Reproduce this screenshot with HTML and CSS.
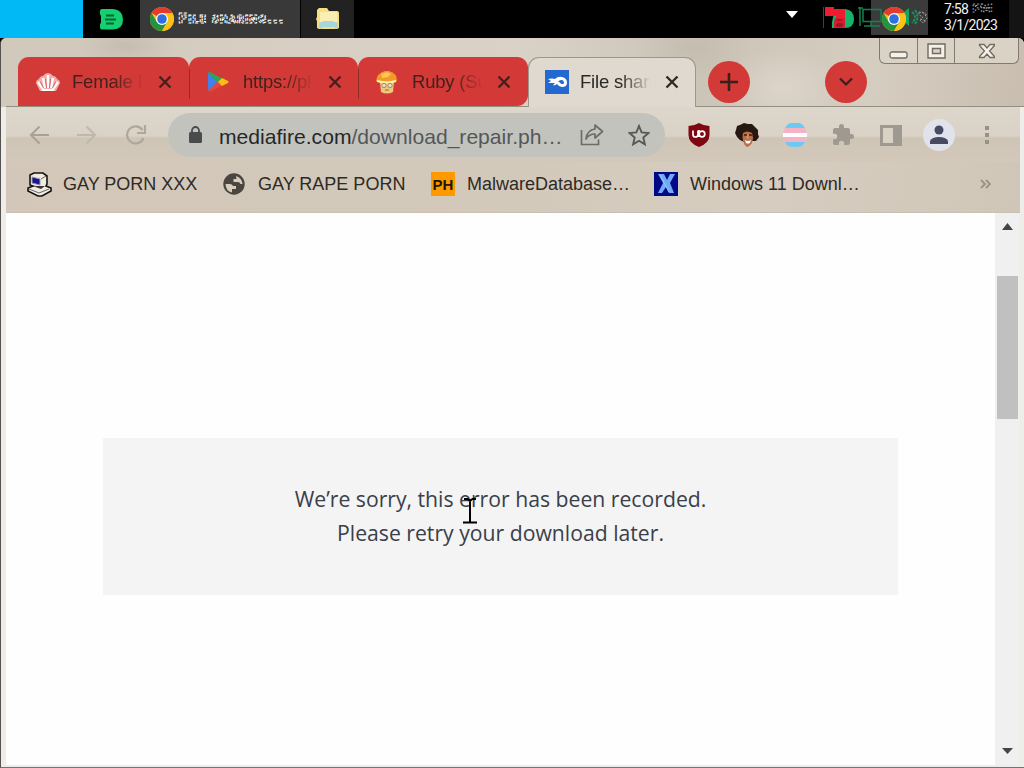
FILE: index.html
```html
<!DOCTYPE html>
<html lang="en">
<head>
    <meta charset="UTF-8">
    <title>File sharing</title>
    <link rel="stylesheet" href="styles.css">
</head>
<body>
    <svg width="0" height="0" class="defs">
        <symbol id="chrome" viewBox="0 0 24 24">
            <circle cx="12" cy="12" r="12" fill="#fbc116"/>
            <path d="M12 12 1.6 6A12 12 0 0 1 22.4 6z" fill="#e33b2e"/>
            <path d="M12 6h10.4L12 12z" fill="#e33b2e"/>
            <path d="M1.6 6A12 12 0 0 0 12 24l5.2-9L12 12 6.8 15z" fill="#229342"/>
            <path d="M22.4 6H12v6l5.2 3L12 24A12 12 0 0 0 22.4 6z" fill="#fbc116"/>
            <circle cx="12" cy="12" r="6" fill="#fff"/>
            <circle cx="12" cy="12" r="4.8" fill="#2f6fe0"/>
        </symbol>
        <symbol id="close" viewBox="0 0 14 14">
            <path d="M1.5 1.5l11 11M12.5 1.5l-11 11" fill="none" stroke="currentColor" stroke-width="2.3"/>
        </symbol>
    </svg>

    <div class="taskbar">
        <div class="start"></div>
        <div class="task pinned">
            <svg width="23" height="21" viewBox="0 0 23 21">
                <path d="M2 0h11q10 1 10 10.500T13 20.500H2q-2 0-2-2v-3l1-2V7L0 5V2q0-2 2-2z" fill="#13cf70"/>
                <path d="M6 6.500h8M5 10.500h11M6 14.500h8" stroke="#063" stroke-width="1.800"/>
            </svg>
        </div>
        <div class="task active">
            <svg width="24" height="24"><use href="#chrome"/></svg>
            <svg class="task-title" width="118" height="24">
                <text x="1" y="16">File sharing...</text>
            </svg>
        </div>
        <div class="task folder">
            <svg width="24" height="22" viewBox="0 0 24 22">
                <path d="M3 0h8l2 3h8q2 0 2 2v15l-2 1H3l-2-1V13l-1-2 1-2V2z" fill="#f5df85"/>
                <path d="M4 4h17v10H4z" fill="#fbeeb0"/>
                <path d="M3 15l5-2h8l6 2v5l-3 1v-2H6v2l-3-1z" fill="#a5d8dc"/>
            </svg>
        </div>
        <div class="tray">
            <svg class="tray-arrow" width="12" height="7"><path d="M0 0h12L6 7z" fill="#fff"/></svg>
            <svg class="tray-icons" width="108" height="38" viewBox="0 0 108 38">
                <path d="M50 0h57v35H50z" fill="#3b3b3b"/>
                <path d="M14 9h10q9 1 9 10t-9 9H11v-6z" fill="#14b568"/>
                <path d="M2.500 7v21" stroke="#a3122a"/>
                <path d="M4 7h9v2h11v9h-9v-2H4z" fill="#ee1c2e"/>
                <path d="M14 18h10v10H13v-5z" fill="#d81b2d"/>
                <path d="M16 20h5M16 24h5v2h-5z" stroke="#6d1824" fill="none"/>
                <path d="M39 7v19M42 9.500h18v12H42zM50 22v4M43 26h16M37 8h5" stroke="#14804f" stroke-width="1.500" fill="none"/>
                <path d="M82 13l6-5v18l-6-5z" fill="#13a862"/>
                <svg x="61" y="7" width="24" height="24"><use href="#chrome"/></svg>
                <path d="M91 12q6 5 0 11M94 10q5 7 0 14" stroke="#14945a" stroke-width="2" stroke-dasharray="3 1" fill="none"/>
                <path d="M98 12l5 1 3 5-3 5-4-2 3-4-4-2zM101 12l5 3M99 19l6 2" stroke="#9b9b9b" fill="none" stroke-dasharray="2 1.500"/>
            </svg>
            <div class="clock">
                <div class="clock-time">7:58
                    <svg width="22" height="14"><text x="0" y="11" textLength="20" lengthAdjust="spacingAndGlyphs">PM</text></svg>
                </div>
                <div>3/1/2023</div>
            </div>
            <div class="peek"></div>
        </div>
    </div>

    <div class="window">
        <div class="tabstrip">
            <div class="tab">
                <svg class="favicon" width="26" height="20" viewBox="0 0 26 20">
                    <path d="M5 19L1 11q0-3 3-4 1-3 4-3 2-3 5-3t5 3q3 0 4 3 3 1 3 4l-4 8z" fill="#f0aeaa"/>
                    <path d="M8 17L3 10M10 16L8 6M13 16V3M16 16l2-10M18 17l5-7" stroke="#fff" stroke-width="2.400"/>
                    <path d="M5.500 10l3 6M10.500 7l1 9M15.500 7l-1 9M20.500 10l-3 6" stroke="#d0645f"/>
                    <path d="M7 17h12v2H7z" fill="#fff"/>
                </svg>
                <span class="tab-title">Female P</span>
                <svg class="tab-close" width="14" height="14"><use href="#close"/></svg>
            </div>
            <div class="tab">
                <svg class="favicon" width="26" height="22" viewBox="0 0 26 22">
                    <path d="M2 2v18l10-9z" fill="#3f82ee"/>
                    <path d="M2 2q1-2 4 0l11 6-5 4z" fill="#2fa456"/>
                    <path d="M2 20q1 1 4 0l11-6-5-4z" fill="#e6473c"/>
                    <path d="M16 7l6 3q1.500 1 0 2l-6 3-4-4z" fill="#fbbc15"/>
                </svg>
                <span class="tab-title">https://pl</span>
                <svg class="tab-close" width="14" height="14"><use href="#close"/></svg>
            </div>
            <div class="tab">
                <svg class="favicon" width="26" height="24" viewBox="0 0 26 24">
                    <path d="M5 12h14l-1 10q-6 3-12 0z" fill="#efc978"/>
                    <path d="M1 11Q2 3 10 1h4q8 2 8 10-10 4-21 0z" fill="#f39a25"/>
                    <path d="M6 4l6-2 4 2-3 3-6 1z" fill="#ffc558"/>
                    <path d="M2 11q10 3 19 0" stroke="#fff0b0" stroke-width="2" fill="none"/>
                    <circle cx="9" cy="15.500" r="2.200" fill="#e5dcc5" stroke="#a58b65"/>
                    <circle cx="15" cy="15.500" r="2.200" fill="#e5dcc5" stroke="#a58b65"/>
                    <path d="M10 20h4" stroke="#a06a3a"/>
                </svg>
                <span class="tab-title">Ruby (Su</span>
                <svg class="tab-close" width="14" height="14"><use href="#close"/></svg>
            </div>
            <div class="tab current">
                <svg class="favicon" width="24" height="24" viewBox="0 0 24 24">
                    <path d="M0 0h24v24H0z" fill="#2369cf"/>
                    <path d="M3 9q4-1 7 0 3-3 7-2 5 1 5 5.500T17 17q-3 0-5-3-2 2-4 1l2-2q-4 0-7 0l3-2z" fill="#fff"/>
                    <path d="M13 11.500q2-2 4-1.500 2 .5 2 2.500T17 14t-2-1.500z" fill="#2369cf"/>
                </svg>
                <span class="tab-title">File shari</span>
                <svg class="tab-close" width="14" height="14"><use href="#close"/></svg>
            </div>
            <div class="round new-tab">
                <svg width="18" height="18"><path d="M9 0v18M0 9h18" stroke="#3a1f1a" stroke-width="2.600"/></svg>
            </div>
            <div class="round search-tabs">
                <svg width="14" height="10"><path d="M1 1.500l6 6 6-6" fill="none" stroke="#3a1f1a" stroke-width="2.200"/></svg>
            </div>
            <div class="controls">
                <div class="control minimize">
                    <svg width="19" height="8"><rect x="1" y="1" width="17" height="6" rx="2" fill="#f6f1e8" stroke="#6f6b62" stroke-width="1.300"/></svg>
                </div>
                <div class="control maximize">
                    <svg width="19" height="17"><path d="M1 1h17v14H1zM5.500 5.500h8v5h-8z" fill="#f6f1e8" fill-rule="evenodd" stroke="#6f6b62" stroke-width="1.400"/></svg>
                </div>
                <div class="control close">
                    <svg width="17" height="17"><path d="M1.500 1.500H6L9 5l3-3.500h4.500v1l-5 5.500 5 5.500v1H12L9 11l-3 3.500H1.500v-1l5-5.500-5-5.500z" fill="#f6f1e8" stroke="#6f6b62" stroke-width="1.300"/></svg>
                </div>
            </div>
        </div>

        <div class="toolbar">
            <svg class="nav" width="20" height="20" viewBox="0 0 20 20"><path d="M20 10H2M10.500 1.500L2 10l8.500 8.500" fill="none" stroke="#a8a197" stroke-width="2"/></svg>
            <svg class="nav" width="20" height="20" viewBox="0 0 20 20"><path d="M0 10h18M9.500 1.500L18 10l-8.500 8.500" fill="none" stroke="#c0b8ac" stroke-width="2"/></svg>
            <svg class="nav" width="22" height="20" viewBox="0 0 22 20"><path d="M17.500 5A8.500 8.500 0 1 0 18.500 13M20 0v8h-8" fill="none" stroke="#aea79c" stroke-width="2.200"/></svg>
            <div class="omnibox">
                <svg class="lock" width="13" height="17" viewBox="0 0 13 17">
                    <path d="M3 7V4.500a3.500 3.500 0 0 1 7 0V7" fill="none" stroke="#4a4b4c" stroke-width="1.800"/>
                    <rect y="6" width="13" height="11" rx="1.500" fill="#4a4b4c"/>
                </svg>
                <span class="url"><b>mediafire.com</b>/download_repair.ph…</span>
                <svg class="share" width="24" height="24" viewBox="0 0 24 24" fill="none" stroke="#6b6d68" stroke-width="1.700">
                    <path d="M1.500 7v14.500h17v-5"/>
                    <path d="M15 2l7.500 6.500L15 15v-4q-6 0-9 5 1-9 9-10z" stroke-linejoin="round"/>
                </svg>
                <svg class="star" width="22" height="22" viewBox="0 0 22 22"><path d="M11 2l2.600 6.400 6.900.6-5.200 4.600 1.600 6.800-5.900-3.600-5.900 3.600 1.600-6.800L1.500 9l6.900-.6z" fill="none" stroke="#575954" stroke-width="1.900"/></svg>
            </div>
            <div class="extensions">
                <svg width="24" height="24" viewBox="0 0 24 24">
                    <path d="M12 0q5 3 10.500 3v9q0 8-10.500 12Q1.500 20 1.500 12V3Q7 3 12 0z" fill="#7e0712"/>
                    <path d="M6 7.500v4q0 2.500 2.500 2.500t2.500-2.500v-4M12 7v7" fill="none" stroke="#fff" stroke-width="1.700"/>
                    <circle cx="15" cy="11" r="2.800" fill="none" stroke="#fff" stroke-width="1.700"/>
                </svg>
                <svg width="24" height="24" viewBox="0 0 24 24">
                    <path d="M5 2l4-2 4 1 4 0 3 3 3 3v4l1 3-3 4-4 0-3 1H9l-4-2-3-3-2-4 1-3 1-4z" fill="#271711"/>
                    <path d="M8 10q4-3 9 0l1 5-1 5q-3 4-5 4-3-2-4-6-1-4 0-8z" fill="#b96f4a"/>
                    <path d="M9 12h3M14 12h3" stroke="#3d1d12" stroke-width="1.500"/>
                    <path d="M10 17q3 2 6 0l-1 3q-3 1-4 0z" fill="#fff"/>
                    <path d="M13 11l-1 4h2" stroke="#e0a078" fill="none"/>
                </svg>
                <svg width="24" height="24" viewBox="0 0 24 24">
                    <path d="M5 1Q12-2 19 1l3 4H2z" fill="#6cc9f4"/>
                    <path d="M2 5h20l2 5H0z" fill="#f4b2c4"/>
                    <path d="M0 10h24v4H0z" fill="#fff"/>
                    <path d="M0 14h24l-2 5H2z" fill="#f4b2c4"/>
                    <path d="M2 19h20l-3 4q-7 2-14 0z" fill="#6cc9f4"/>
                </svg>
                <svg width="24" height="24" viewBox="0 0 24 24"><path d="M20.500 11H19V7a2 2 0 0 0-2-2h-4V3.500a2.500 2.500 0 0 0-5 0V5H4a2 2 0 0 0-2 2v3.800h1.500a2.700 2.700 0 0 1 0 5.400H2V20a2 2 0 0 0 2 2h3.800v-1.500a2.700 2.700 0 0 1 5.400 0V22H17a2 2 0 0 0 2-2v-4h1.500a2.500 2.500 0 0 0 0-5z" fill="#9f9990"/></svg>
                <svg width="24" height="24" viewBox="0 0 24 24"><path d="M1 2h22v21H1zM4 5v15h10V5z" fill="#9f9990" fill-rule="evenodd"/><path d="M4 5h10v15H4z" fill="#d9d1c4"/></svg>
            </div>
            <div class="profile">
                <svg width="20" height="20" viewBox="0 0 20 20"><circle cx="10" cy="5" r="4.500" fill="#474b61"/><path d="M1 19v-3q2-4 9-4t9 4v3z" fill="#474b61"/></svg>
            </div>
            <svg class="menu" width="6" height="20"><path d="M1 1h4v4H1zM1 8h4v4H1zM1 15h4v4H1z" fill="#989188"/></svg>
        </div>

        <div class="bookmarks">
            <div class="bookmark b1">
                <svg width="26" height="26" viewBox="0 0 26 26">
                    <path d="M4 4l4-2h9l4 3v8l-1 2 5 2v3l-9 5h-4L2 20v-3l5-2-3-1z" fill="#eeebe4" stroke="#16130f" stroke-width="1.600"/>
                    <path d="M6 6l8 2v6l-8-2z" fill="#17149a" stroke="#999"/>
                    <path d="M3 18l10 4 10-4M15 8l5-3" stroke="#6b665f" fill="none"/>
                    <path d="M7 15h12l-4 3z" fill="#3a362f"/>
                </svg>
                <span>GAY PORN XXX</span>
            </div>
            <div class="bookmark b2">
                <svg width="22" height="22" viewBox="0 0 22 22">
                    <circle cx="11" cy="11" r="10.700" fill="#4b463f"/>
                    <path d="M2.500 11h4q3 0 3.500 2h3v3H9v3.500q-6-1-6.500-8.500zM13 3q6 2 6.500 8h-2q-.5-2-3-2h-4V6h3z" fill="#d8cdbd"/>
                </svg>
                <span>GAY RAPE PORN</span>
            </div>
            <div class="bookmark b3">
                <div class="ph">PH</div>
                <span>MalwareDatabase…</span>
            </div>
            <div class="bookmark b4">
                <svg width="24" height="24" viewBox="0 0 24 24">
                    <path d="M0 0h24v24H0z" fill="#000a88"/>
                    <path d="M4 2h6l3 6 3-6h5l-5 9 4 10h-5l-3-6-4 6H4l5-10z" fill="#72a9f7"/>
                    <path d="M6 3l9 17" stroke="#9cc6ff"/>
                </svg>
                <span>Windows 11 Downl…</span>
            </div>
            <svg class="more" width="11" height="10"><path d="M1 1l4 4-4 4M6 1l4 4-4 4" fill="none" stroke="#989188" stroke-width="1.800"/></svg>
        </div>

        <div class="content">
            <div class="page">
                <div class="error">
                    <p>We’re sorry, this error has been recorded.</p>
                    <p>Please retry your download later.</p>
                    <svg class="cursor" width="14" height="26"><path d="M1 1h4M9 1h4M5 1l2 2 2-2M7 2v22M0 24.500h14" fill="none" stroke="#000" stroke-width="2"/></svg>
                </div>
            </div>
            <div class="scrollbar">
                <svg width="11" height="7"><path d="M0 7h11L5.500 0z" fill="#454545"/></svg>
                <div class="thumb"></div>
                <svg class="down" width="11" height="7"><path d="M0 0h11L5.500 6z" fill="#454545"/></svg>
            </div>
        </div>
    </div>
</body>
</html>
```

FILE: styles.css
```css
* {
    margin: 0;
    padding: 0;
    box-sizing: border-box;
}

body {
    width: 1024px;
    height: 768px;
    overflow: hidden;
    background: #000;
    font-family: "Liberation Sans", Arial, sans-serif;
    display: flex;
    flex-direction: column;
}

svg {
    display: block;
    flex: none;
}

.defs {
    position: absolute;
}

/* taskbar */
.taskbar {
    height: 38px;
    flex: none;
    display: flex;
    background: #000;
}

.start {
    width: 83px;
    background: #00b9f5;
}

.task {
    display: flex;
    align-items: center;
}

.pinned {
    width: 57px;
    padding-left: 17px;
}

.active {
    width: 160px;
    padding-left: 10px;
    background: #393939;
}

.task-title {
    margin-left: 3px;
}

.task-title text {
    font: bold 14px "DejaVu Sans", sans-serif;
    font-variant: small-caps;
    letter-spacing: 0.5px;
    fill: #393939;
    stroke: #fff;
    stroke-width: 1;
    stroke-dasharray: 3 1.500;
}

.folder {
    width: 53px;
    margin-left: 1px;
    padding-left: 15px;
    background: #222;
}

.tray {
    margin-left: auto;
    display: flex;
}

.tray-arrow {
    margin: 11px 23px 0 0;
}

.clock {
    width: 80px;
    padding: 1px 0 0 15px;
    color: #f2f2f2;
    font: 14px/16px Roboto, sans-serif;
    letter-spacing: -0.7px;
}

.clock-time {
    display: flex;
    gap: 4px;
}

.clock svg text {
    font: bold 11px "DejaVu Sans", sans-serif;
    fill: none;
    stroke: #aaa;
    stroke-dasharray: 1.500 2;
}

.peek {
    width: 15px;
    background: #141414;
}

/* browser window */
.window {
    flex: 1;
    display: flex;
    flex-direction: column;
    border-left: 1px solid #56534f;
    border-bottom: 1px solid #77736f;
    border-radius: 6px 6px 0 0;
    overflow: hidden;
    background: #efedea;
}

.tabstrip {
    height: 69px;
    flex: none;
    display: flex;
    align-items: flex-start;
    padding-left: 17px;
    background:
        linear-gradient(#948e82, #948e82) 695px 68px / 328px 1px no-repeat,
        linear-gradient(#948e82, #948e82) 5px 68px / 522px 1px no-repeat,
        radial-gradient(ellipse 50px 18px at 125px 8px, #b9b0a488, transparent),
        radial-gradient(ellipse 60px 30px at 690px 10px, #b9b0a466, transparent),
        radial-gradient(ellipse 60px 40px at 780px 50px, #e2dbd0aa, transparent),
        linear-gradient(100deg, #d0c8ba, #d6cec1 25%, #dad2c7 50%, #cdc4b8 68%, #d6cdc1 85%, #c8bdaf);
}

.tab {
    width: 169px;
    height: 49px;
    margin-top: 19px;
    padding: 0 16px 0 17px;
    display: flex;
    align-items: center;
    background: linear-gradient(#8f2f2c, #8f2f2c) 0 12px / 1px 30px no-repeat #d33936;
    border-radius: 11px 11px 0 0;
    color: #43211c;
    font-size: 18.500px;
}

.tab:first-child {
    width: 171px;
    padding-right: 17px;
    background: #d33936;
}

.tab:nth-child(3) {
    width: 170px;
    padding-right: 17px;
    border-radius: 11px 11px 11px 0;
}

.tab-title {
    width: 73px;
    margin-left: 11px;
    overflow: hidden;
    white-space: nowrap;
    letter-spacing: -0.2px;
    mask-image: linear-gradient(90deg, #000 55%, transparent 98%);
}

.tab-close {
    margin-left: auto;
}

.tab.current {
    width: 168px;
    height: 50px;
    padding: 0 16px 2px 16px;
    background: #dfd9cf;
    color: #2b2924;
    border: 1px solid #9c968b;
    border-bottom: 0;
    border-radius: 11px 11px 0 0;
}

.round {
    width: 42px;
    height: 42px;
    border-radius: 50%;
    background: #d33936;
    display: flex;
    align-items: center;
    justify-content: center;
}

.new-tab {
    margin: 23px 0 0 12px;
}

.search-tabs {
    margin: 23px 0 0 75px;
}

.controls {
    height: 26px;
    margin: 0 5px 0 auto;
    display: flex;
    border: 1px solid #807a70;
    border-top: 0;
    border-radius: 0 0 6px 6px;
    background: #dad2c5;
}

.control {
    display: flex;
    justify-content: center;
    padding-top: 5px;
}

.minimize {
    width: 37px;
    padding-top: 13px;
}

.maximize {
    width: 38px;
    border: 1px solid #807a70;
    border-width: 0 1px;
}

.close {
    width: 63px;
}

.toolbar {
    height: 55px;
    flex: none;
    display: flex;
    align-items: center;
    margin: 0 4px 0 5px;
    padding-left: 23px;
    background: linear-gradient(#ddd6cb 0, #dad2c6 29px, #cfc5b7 31px, #d3c8b9);
}

.nav {
    margin-right: 28px;
}

.omnibox {
    width: 497px;
    height: 44px;
    margin: 0 22px 0 -7px;
    padding-left: 21px;
    border-radius: 22px;
    background: #c3c3bd;
    display: flex;
    align-items: center;
}

.url {
    width: 361px;
    margin-left: 17px;
    padding-top: 4px;
    color: #54575a;
    font-size: 21.100px;
    white-space: nowrap;
}

.url b {
    font-weight: normal;
    color: #25272a;
}

.share {
    margin-right: 24px;
}

.extensions {
    display: flex;
    gap: 24px;
}

.profile {
    width: 32px;
    height: 32px;
    margin-left: 20px;
    border-radius: 50%;
    background: #e1e3ec;
    display: flex;
    align-items: center;
    justify-content: center;
}

.menu {
    margin-left: 29px;
}

.bookmarks {
    height: 51px;
    flex: none;
    display: flex;
    align-items: center;
    margin: 0 4px 0 5px;
    padding: 0 29px 7px 20px;
    color: #2e2a25;
    font-size: 18px;
    white-space: nowrap;
    background: linear-gradient(100deg, #d2c7b8, #d3c9bb 50%, #d6cdc0 75%, #d0c6b8);
    border-bottom: 1px solid #c8c0b4;
}

.bookmark {
    display: flex;
    align-items: center;
}

.bookmark span {
    padding-top: 2px;
}

.b1 {
    width: 197px;
    gap: 11px;
}

.b2 {
    width: 208px;
    gap: 13px;
}

.b3 {
    width: 223px;
    gap: 12px;
}

.b4 {
    gap: 12px;
}

.ph {
    width: 24px;
    height: 24px;
    background: #ff9900;
    color: #241500;
    font-size: 15px;
    font-weight: bold;
    line-height: 25px;
    text-align: center;
}

.more {
    margin-left: auto;
}

/* page */
.content {
    flex: 1;
    display: flex;
    margin: 0 5px 2px;
    background: #fefefe;
}

.page {
    flex: 1;
    padding: 225px 97px 0;
}

.error {
    position: relative;
    height: 157px;
    padding-top: 44px;
    background: #f4f4f4;
    color: #3a3f49;
    font: 21.200px/34px "Open Sans", sans-serif;
    text-align: center;
}

.cursor {
    position: absolute;
    left: 360px;
    top: 60px;
}

.scrollbar {
    width: 24px;
    padding: 10px 1px 10px 2px;
    display: flex;
    flex-direction: column;
    align-items: center;
    background: #f0f0f0;
}

.thumb {
    width: 21px;
    height: 143px;
    margin-top: 46px;
    background: #c0c0c0;
}

.down {
    margin-top: auto;
}
```
